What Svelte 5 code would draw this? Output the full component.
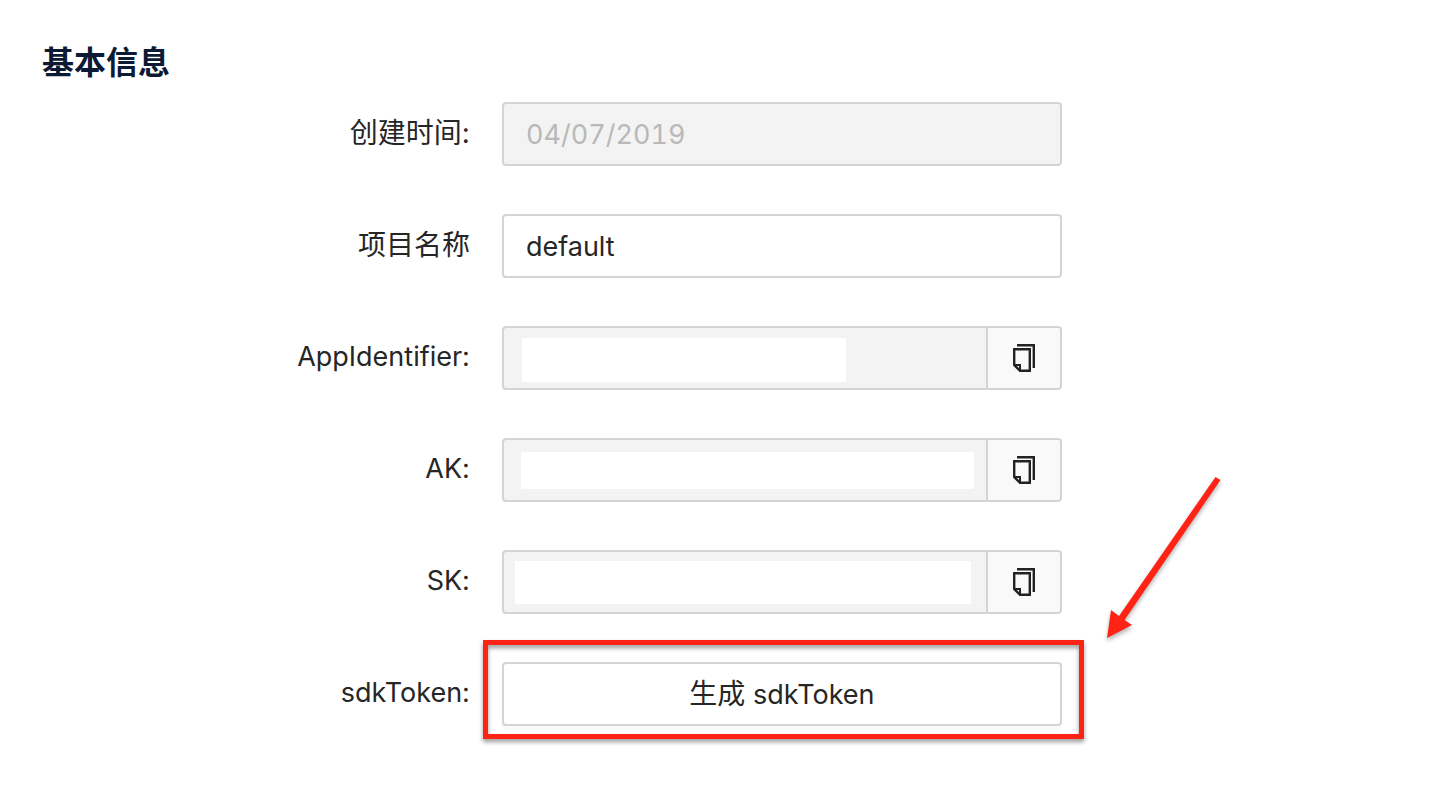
<script>
  let projectName = "default";
  const createdAt = "04/07/2019";

  const secrets = [
    { id: "identifier", label: "AppIdentifier:", mask: "mask-identifier" },
    { id: "ak", label: "AK:", mask: "mask-ak" },
    { id: "sk", label: "SK:", mask: "mask-sk" },
  ];
</script>

<main>
  <h1>基本信息</h1>

  <form on:submit|preventDefault>
    <div class="row">
      <label for="created">创建时间:</label>
      <div class="field">
        <input id="created" class="latin date" type="text" value={createdAt} disabled />
      </div>
    </div>

    <div class="row">
      <label for="name">项目名称</label>
      <div class="field">
        <input id="name" class="latin" type="text" autocomplete="off" bind:value={projectName} />
      </div>
    </div>

    {#each secrets as secret}
      <div class="row">
        <label class="latin" for={secret.id}>{secret.label}</label>
        <div class="field">
          <input id={secret.id} class="joined" type="text" disabled />
          <span class="mask {secret.mask}"></span>
          <button class="copy" type="button" aria-label="复制">
            <svg width="24" height="28" viewBox="0 0 24 28" fill="none" stroke="#222" stroke-width="2.4">
              <path d="M5 1.2H21.8V24" />
              <path d="M2.2 5.2H17.8V26.8H8L2.2 21Z" />
              <path d="M2 21H8V27" stroke-width="2" />
            </svg>
          </button>
        </div>
      </div>
    {/each}

    <div class="row">
      <label class="latin" for="token">sdkToken:</label>
      <div class="field">
        <button id="token" class="generate" type="button">生成 <span class="latin">sdkToken</span></button>
        <span class="highlight"></span>
        <svg class="arrow" width="150" height="190" viewBox="0 0 150 190" aria-hidden="true">
          <path d="M125.5 12L130.5 15L34.5 155L42 160L17 173L21 145L29 151Z" fill="#ff2316" />
        </svg>
      </div>
    </div>
  </form>
</main>

<style>
  :global(body) {
    margin: 0;
    background: #fff;
  }

  main {
    padding: 39px 0 48px;
    overflow: hidden;
    color: #262626;
    font-family: Inter, "Noto Sans CJK SC", sans-serif;
    font-size: 28px;
    font-variant-ligatures: no-contextual;
  }

  h1 {
    margin: 0 0 15px;
    padding-left: 42px;
    color: #0d1a33;
    font-size: 32px;
    font-weight: 700;
    line-height: 48px;
  }

  form {
    display: flex;
    flex-direction: column;
    gap: 48px;
  }

  .row {
    display: grid;
    grid-template-columns: 35% 39.05%;
  }

  label {
    padding-right: 32px;
    line-height: 62px;
    text-align: right;
  }

  .field {
    position: relative;
    display: flex;
  }

  input,
  button {
    box-sizing: border-box;
    height: 64px;
    border: 2px solid #d4d4d4;
    border-radius: 4px;
    background: #fff;
    color: #262626;
    font: inherit;
  }

  .latin {
    font-size: 27px;
  }

  input {
    flex: 1;
    min-width: 0;
    padding: 0 22px;
  }

  input:disabled {
    background: #f3f3f3;
    color: #b8b8b8;
  }

  .date {
    font-variant-numeric: tabular-nums;
  }

  .joined {
    border-right: 0;
    border-radius: 4px 0 0 4px;
  }

  button {
    padding: 0;
    cursor: pointer;
  }

  .copy {
    display: flex;
    align-items: center;
    justify-content: center;
    width: 76px;
    border-radius: 0 4px 4px 0;
    background: #f9f9f9;
  }

  .generate {
    flex: 1;
    padding-bottom: 4px;
    box-shadow: 0 4px 0 #fafafa;
  }

  /* blocks covering the secret values */
  .mask {
    position: absolute;
    background: #fff;
  }

  .mask-identifier {
    top: 12px;
    bottom: 8px;
    left: 20px;
    width: 324px;
  }

  .mask-ak {
    top: 14px;
    right: 88px;
    bottom: 13px;
    left: 19px;
  }

  .mask-sk {
    top: 11px;
    right: 91px;
    bottom: 10px;
    left: 13px;
  }

  .highlight {
    position: absolute;
    inset: -22px -22px -13px -19px;
    border: 5px solid #ff2316;
    filter: drop-shadow(0 3px 2px rgba(0, 0, 0, 0.4));
    pointer-events: none;
  }

  .arrow {
    position: absolute;
    top: -197px;
    left: calc(100% + 28px);
    filter: drop-shadow(0 3px 2px rgba(0, 0, 0, 0.3));
    pointer-events: none;
  }
</style>
